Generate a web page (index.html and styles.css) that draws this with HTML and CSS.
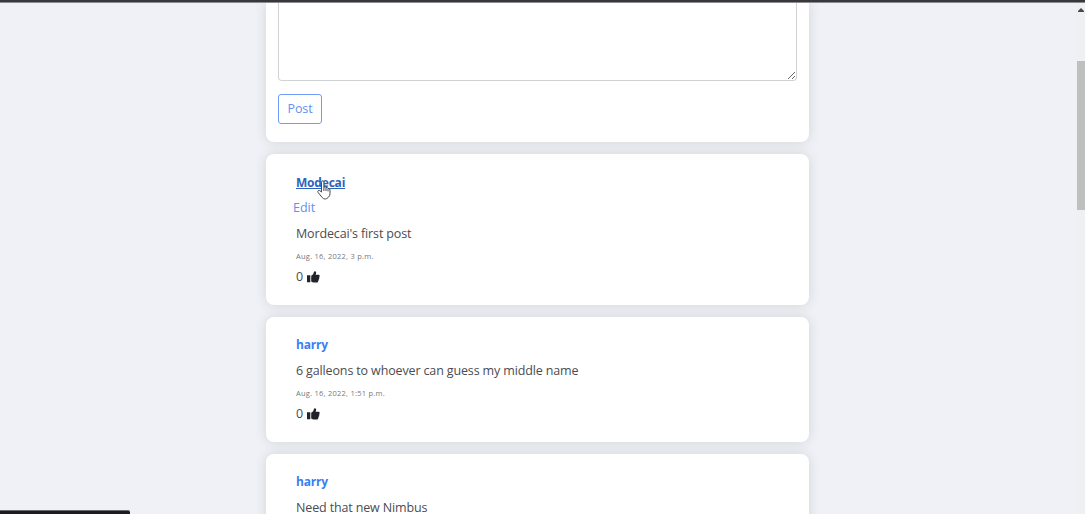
FILE: index.html
```html
<!DOCTYPE html>
<html lang="en">
<head>
<meta charset="utf-8">
<title>Posts</title>
<link rel="stylesheet" href="styles.css">
</head>
<body>
<div class="window-edge"></div>
<div class="viewport">
  <main class="feed">
    <section class="card composer">
      <textarea class="composer-input" aria-label="New post"></textarea>
      <button class="post-button">Post</button>
    </section>
    <article class="card post">
      <a class="author author-hover">Modecai</a>
      <a class="edit">Edit</a>
      <p class="message">Mordecai's first post</p>
      <p class="date">Aug. 16, 2022, 3 p.m.</p>
      <div class="likes"><span>0</span><svg class="thumb" viewBox="0 0 13 12"><path d="M0 4.2h3.3v7H0zM4.200 4.800 6.200 3.200 7 .8Q7.400 0 8.200.2 9.500.6 9.100 2.200L8.600 3.800h3Q13 4 12.700 5.300L12.200 6l.2 1.200-.6.900v1l-.6.8-.3 1q-.4.7-1.300.7H7Q5.400 11.500 4.200 10.500z"/></svg></div>
    </article>
    <article class="card post">
      <a class="author">harry</a>
      <p class="message">6 galleons to whoever can guess my middle name</p>
      <p class="date">Aug. 16, 2022, 1:51 p.m.</p>
      <div class="likes"><span>0</span><svg class="thumb" viewBox="0 0 13 12"><path d="M0 4.2h3.3v7H0zM4.200 4.800 6.200 3.200 7 .8Q7.400 0 8.200.2 9.500.6 9.100 2.200L8.600 3.800h3Q13 4 12.700 5.300L12.200 6l.2 1.200-.6.900v1l-.6.8-.3 1q-.4.7-1.300.7H7Q5.400 11.500 4.200 10.500z"/></svg></div>
    </article>
    <article class="card post">
      <a class="author">harry</a>
      <p class="message">Need that new Nimbus</p>
    </article>
  </main>
  <div class="scrollbar">
    <svg class="scroll-arrow" viewBox="0 0 6 4"><path d="M3 0 6 3v1H0V3z"/></svg>
    <div class="scroll-thumb"></div>
  </div>
</div>
<div class="status-edge"></div>
<svg class="pointer" viewBox="0 0 14 20"><path d="M4.500 12V2.200Q4.600.8 5.700.8T6.900 2.200V7Q8.500 6.200 9 7.600 10.500 7 11 8.400 13 8 13 10v3.500Q13 16 11.400 17.300 9.500 19 8.300 19 6.200 19 5.200 17.500L1.200 12.600Q.3 11 1.500 10.400 2.500 10.100 4.500 12zM6.900 7v4M9 7.600V11M11 8.400v3"/></svg>
</body>
</html>
```
FILE: styles.css
```css
* {
  box-sizing: border-box;
}

body {
  margin: 0;
  height: 514px;
  overflow: hidden;
  background: #eff1f6;
  color: #4b4c50;
  font: 12.5px/20px "Trebuchet MS", "Open Sans", sans-serif;
}

.window-edge {
  height: 3px;
  background: #38373b;
  border-bottom: 1px solid #8c8c90;
}

.viewport {
  display: flex;
  justify-content: space-between;
  height: 511px;
  overflow: hidden;
}

.feed {
  display: flex;
  flex-direction: column;
  gap: 12px;
  width: 543px;
  margin-left: 266px;
}

.card {
  flex: none;
  background: #fff;
  border-radius: 8px;
  box-shadow: 0 0 12px rgba(60, 68, 54, 0.16);
}

.composer {
  display: flex;
  flex-direction: column;
  align-items: flex-start;
  height: 139px;
  padding: 0 12px;
  border-radius: 0 0 8px 8px;
}

.composer-input {
  width: 519px;
  height: 78px;
  border: 1px solid #d0d3d6;
  border-top: 0;
  border-radius: 0 0 4px 4px;
  background: #fff;
  resize: vertical;
}

.post-button {
  width: 44px;
  height: 30px;
  margin-top: 13px;
  padding: 0;
  border: 1px solid #6f9cf8;
  border-radius: 3px;
  background: #fff;
  color: #6590f0;
  font: inherit;
  letter-spacing: -0.1px;
}

.post {
  display: flex;
  flex-direction: column;
  align-items: flex-start;
  padding: 18.5px 30px 18px;
}

.author {
  margin-bottom: 5.5px;
  color: #397ef3;
  font-size: 12px;
  font-weight: 700;
  letter-spacing: -0.2px;
}

.author-hover {
  color: #2f62bd;
  text-decoration: underline;
}

.edit {
  margin: 0 0 5.5px -3px;
  color: #6290ee;
}

.message {
  margin: 0;
  letter-spacing: -0.14px;
}

.date {
  margin: 0;
  color: #77787c;
  font-size: 7.5px;
  line-height: 24px;
  letter-spacing: 0.24px;
}

.likes {
  display: flex;
  align-items: center;
  gap: 4px;
  height: 19px;
}

.thumb {
  width: 13px;
  height: 12px;
  fill: #202329;
}

.scrollbar {
  width: 9px;
  padding-top: 5px;
  background: #eff0f1;
}

.scroll-arrow {
  display: block;
  width: 6px;
  height: 4px;
  margin-left: 2px;
  fill: #48494b;
}

.scroll-thumb {
  height: 149px;
  margin: 49px 0 0 1px;
  background: #bec0c0;
}

.status-edge {
  position: absolute;
  left: 0;
  bottom: 0;
  width: 130px;
  height: 4px;
  border-top: 1px solid #69696f;
  border-radius: 0 2px 0 0;
  background: #1c1b22;
}

.pointer {
  position: absolute;
  left: 317px;
  top: 180px;
  width: 14px;
  height: 20px;
  fill: #fff;
  stroke: #46484d;
  stroke-width: 1;
}
```
